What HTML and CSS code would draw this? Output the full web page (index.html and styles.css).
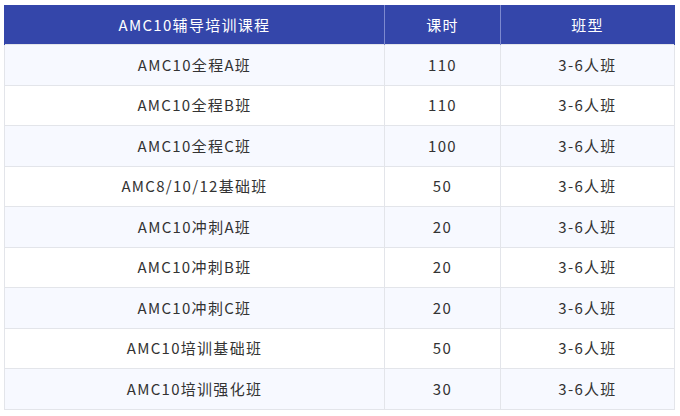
FILE: index.html
```html
<!DOCTYPE html>
<html lang="zh-CN">
<head>
<meta charset="utf-8">
<link rel="stylesheet" href="styles.css">
</head>
<body>
<table class="course-table">
  <colgroup>
    <col class="c1"><col class="c2"><col class="c3">
  </colgroup>
  <thead>
    <tr><th>AMC10辅导培训课程</th><th>课时</th><th>班型</th></tr>
  </thead>
  <tbody>
    <tr><td>AMC10全程A班</td><td>110</td><td>3-6人班</td></tr>
    <tr><td>AMC10全程B班</td><td>110</td><td>3-6人班</td></tr>
    <tr><td>AMC10全程C班</td><td>100</td><td>3-6人班</td></tr>
    <tr><td>AMC8/10/12基础班</td><td>50</td><td>3-6人班</td></tr>
    <tr><td>AMC10冲刺A班</td><td>20</td><td>3-6人班</td></tr>
    <tr><td>AMC10冲刺B班</td><td>20</td><td>3-6人班</td></tr>
    <tr><td>AMC10冲刺C班</td><td>20</td><td>3-6人班</td></tr>
    <tr><td>AMC10培训基础班</td><td>50</td><td>3-6人班</td></tr>
    <tr><td>AMC10培训强化班</td><td>30</td><td>3-6人班</td></tr>
  </tbody>
</table>
</body>
</html>
```
FILE: styles.css
```css
html, body {
  margin: 0;
  padding: 0;
  background: #ffffff;
}
body {
  padding: 5px 0 0 4px;
  font-family: "Noto Sans CJK SC", "Noto Sans", sans-serif;
}
.course-table {
  border-collapse: collapse;
  table-layout: fixed;
  width: 670px;
  font-size: 15px;
  letter-spacing: 1.3px;
}
.c1 { width: 380px; }
.c2 { width: 116px; }
.c3 { width: 174px; }
.course-table th {
  background: #3446aa;
  color: #ffffff;
  font-weight: normal;
  height: 38px;
  padding: 0 0 1px;
  text-align: center;
  border-left: 1px solid #7d89cf;
  border-right: 1px solid #7d89cf;
}
.course-table th:first-child { border-left: 1px solid #3446aa; }
.course-table th:last-child { border-right: 1px solid #3446aa; }
.course-table td {
  height: 38.5px;
  padding: 0 0 1px;
  text-align: center;
  color: #333333;
  border: 1px solid #e3e5ea;
}
.course-table tbody tr:nth-child(odd) td { background: #f7f9ff; }
.course-table tbody tr:nth-child(even) td { background: #ffffff; }
```
